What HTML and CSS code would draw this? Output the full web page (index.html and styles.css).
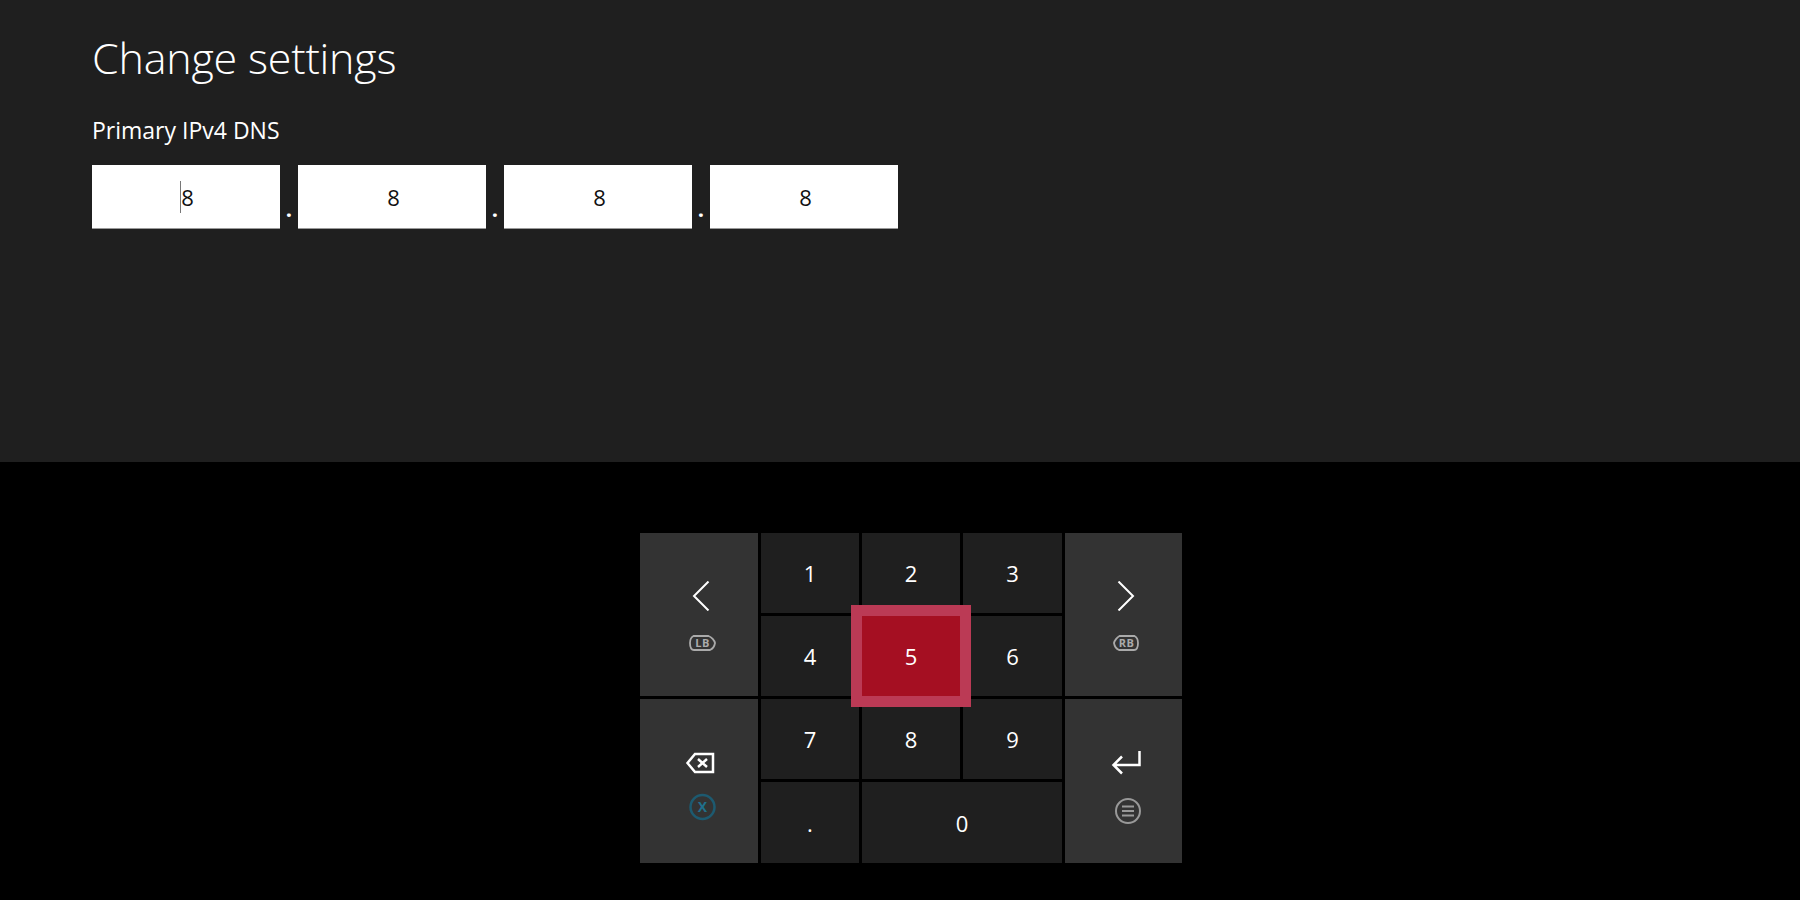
FILE: index.html
```html
<!DOCTYPE html>
<html lang="en">
<head>
<meta charset="utf-8">
<title>Change settings</title>
<link rel="stylesheet" href="styles.css">
</head>
<body>
<header class="panel">
  <h1 class="title">Change settings</h1>
  <div class="label">Primary IPv4 DNS</div>
  <div class="fields">
    <div class="field"><span class="value"><span class="caret"></span>8</span></div>
    <span class="sep">.</span>
    <div class="field"><span class="value">8</span></div>
    <span class="sep">.</span>
    <div class="field"><span class="value">8</span></div>
    <span class="sep">.</span>
    <div class="field"><span class="value">8</span></div>
  </div>
</header>
<main class="pad">
  <div class="keys">
    <div class="key wide wide-a">
      <svg class="icon chev" viewBox="0 0 40 30"><path class="line" d="M29.5 .5 15 15 29.5 29.5"/></svg>
      <svg class="icon badge" viewBox="0 0 40 16"><path class="pill" d="M14.500 1h15c3 1 6 4.500 6.500 7-.5 3-2.500 6-5 7H15c-2.500 0-4-2.500-4-7 0-3.500 1.500-6 3.500-7z"/><text class="badge-text" x="23.500" y="12">LB</text></svg>
    </div>
    <div class="key">1</div>
    <div class="key">2</div>
    <div class="key">3</div>
    <div class="key wide wide-a">
      <svg class="icon chev" viewBox="0 0 40 30"><path class="line" d="M14.500 .5 29 15 14.500 29.500"/></svg>
      <svg class="icon badge" viewBox="0 0 40 16"><path class="pill" d="M15.500 1h15c2 1 3.500 3.500 3.500 7 0 4.500-1.500 7-4 7H15c-2.500-1-4.500-4-5-7 .5-2.500 3.500-6 5.500-7z"/><text class="badge-text" x="22.500" y="12">RB</text></svg>
    </div>
    <div class="key">4</div>
    <div class="key focus">5</div>
    <div class="key">6</div>
    <div class="key wide wide-b">
      <svg class="icon glyph" viewBox="0 0 40 22"><path class="thick" d="M34 2H16L8.500 11 16 20H34Z"/><path class="thick" d="M19 7 28 15M28 7 19 15"/></svg>
      <svg class="icon round" viewBox="0 0 40 28"><circle class="ring-x" cx="23.500" cy="14" r="12"/><text class="x-text" x="23.500" y="19">X</text></svg>
    </div>
    <div class="key">7</div>
    <div class="key">8</div>
    <div class="key">9</div>
    <div class="key wide wide-b">
      <svg class="icon glyph" viewBox="0 0 40 22"><path class="thick" d="M35.500 -1V13H10M18 4.500 9.500 13 18 21.500"/></svg>
      <svg class="icon round menu" viewBox="0 0 40 28"><circle class="ring" cx="24" cy="14" r="12"/><path class="bars" d="M18 9.500H30M18 14H30M18 18.500H30"/></svg>
    </div>
    <div class="key">.</div>
    <div class="key zero">0</div>
  </div>
</main>
</body>
</html>
```
FILE: styles.css
```css
* { box-sizing: border-box; }
html, body { margin: 0; height: 100%; }
body {
  width: 1800px;
  height: 900px;
  background: #000;
  color: #fff;
  font-family: "Open Sans", "Noto Sans", sans-serif;
  overflow: hidden;
}
.panel {
  height: 462px;
  background: #1f1f1f;
  padding: 33px 0 0 92px;
}
.title {
  margin: 0;
  font-size: 43px;
  font-weight: 340;
  line-height: 50px;
  letter-spacing: -0.2px;
}
.label {
  margin-top: 32px;
  font-size: 23px;
  line-height: 30px;
}
.fields {
  display: flex;
  margin-top: 20px;
  height: 64px;
}
.field {
  width: 188px;
  height: 64px;
  background: #fff;
  color: #111;
  border-bottom: 1px solid #999;
  display: flex;
  align-items: center;
  justify-content: center;
  padding-left: 3px;
  font-size: 22px;
}
.value { position: relative; }
.caret {
  position: absolute;
  left: -1px;
  top: -1px;
  width: 1px;
  height: 32px;
  background: #777;
}
.sep {
  width: 18px;
  text-align: center;
  font-size: 22px;
  font-weight: 700;
  line-height: 30px;
  padding-top: 28px;
}
.pad {
  padding: 71px 0 0 640px;
}
.keys {
  display: grid;
  grid-template-columns: 118px 98px 98px 99px 117px;
  grid-template-rows: 80px 80px 80px 81px;
  gap: 3px;
  width: 542px;
}
.key {
  background: #1f1f1f;
  display: flex;
  align-items: center;
  justify-content: center;
  font-size: 22px;
}
.wide {
  grid-row: span 2;
  background: #333;
  flex-direction: column;
  justify-content: flex-start;
}
.wide-a { padding-top: 48px; }
.wide-b { padding-top: 53px; }
.focus {
  position: relative;
  z-index: 1;
  background: #a50f22;
  box-shadow: 0 0 0 11px #bb3a55;
}
.zero { grid-column: span 2; }
.icon { display: block; width: 40px; flex: none; }
.chev { height: 30px; }
.badge { height: 16px; margin-top: 24px; }
.glyph { height: 22px; overflow: visible; }
.round { height: 28px; margin-top: 19px; }
.menu { margin-top: 23px; }
.line { fill: none; stroke: #fff; stroke-width: 2; }
.thick { fill: none; stroke: #fff; stroke-width: 2.5; }
.pill { fill: none; stroke: #aaa; stroke-width: 1.8; }
.badge-text {
  fill: #aaa;
  font-family: "Open Sans", sans-serif;
  font-size: 11px;
  font-weight: 700;
  text-anchor: middle;
  letter-spacing: 0.5px;
}
.ring { fill: none; stroke: #999; stroke-width: 2; }
.bars { fill: none; stroke: #999; stroke-width: 2; }
.ring-x { fill: none; stroke: #1d5a70; stroke-width: 2.5; }
.x-text {
  fill: #20708c;
  font-family: "Open Sans", sans-serif;
  font-size: 14px;
  font-weight: 700;
  text-anchor: middle;
}
```
